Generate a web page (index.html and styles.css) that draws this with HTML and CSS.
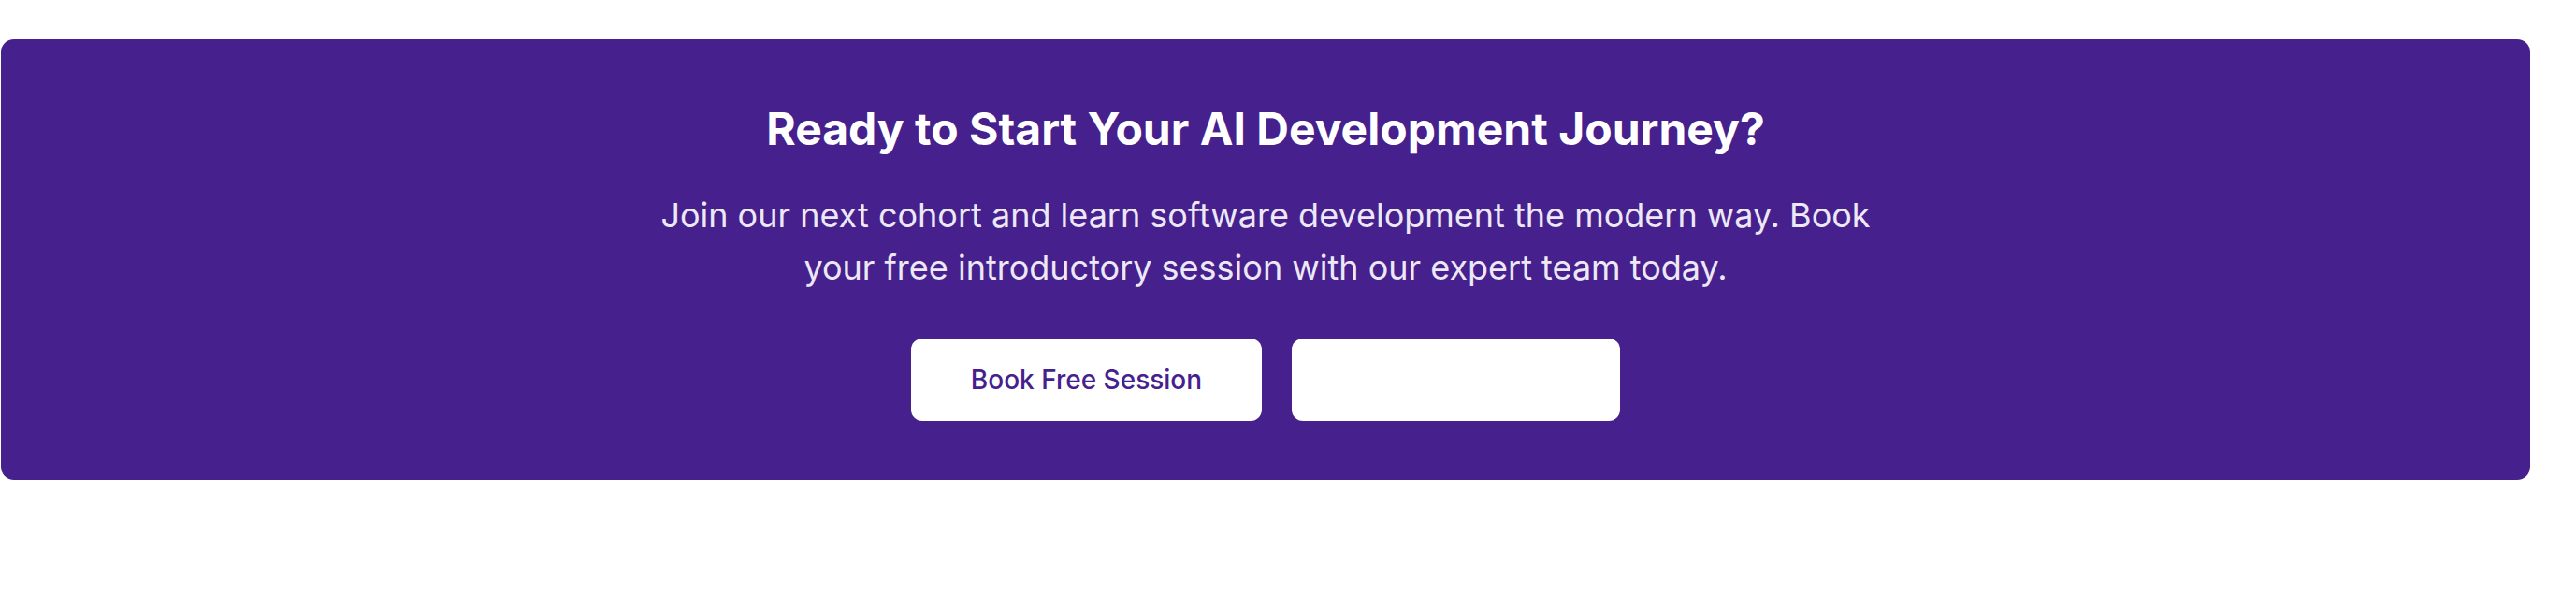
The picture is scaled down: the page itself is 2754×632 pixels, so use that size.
FILE: index.html
```html
<!DOCTYPE html>
<html lang="en">
<head>
<meta charset="utf-8">
<title>CTA</title>
<link rel="stylesheet" href="styles.css">
</head>
<body>
<main class="page">
  <section class="cta">
    <h2 class="cta-title">Ready to Start Your AI Development Journey?</h2>
    <p class="cta-text">Join our next cohort and learn software development the modern way. Book your free introductory session with our expert team today.</p>
    <div class="cta-actions">
      <a class="btn btn-primary" href="#">Book Free Session</a>
      <a class="btn btn-secondary" href="#">View Curriculum</a>
    </div>
  </section>
</main>
</body>
</html>
```
FILE: styles.css
```css
html, body {
  margin: 0;
  padding: 0;
  background: #ffffff;
}
body {
  font-family: Inter, "Noto Sans", sans-serif;
}
.page {
  padding: 42px 0 0 1px;
}
.cta {
  width: 2704px;
  box-sizing: border-box;
  background: #46208c;
  border-radius: 14px;
  padding: 64px 32px 63px;
  display: flex;
  flex-direction: column;
  align-items: center;
  text-align: center;
}
.cta-title {
  margin: 0 0 32px;
  font-size: 48px;
  line-height: 64px;
  font-weight: 700;
  color: #ffffff;
}
.cta-text {
  margin: 0 0 48px;
  max-width: 1344px;
  font-size: 36px;
  line-height: 56px;
  font-weight: 400;
  color: #ece8f6;
}
.cta-actions {
  display: flex;
  gap: 32px;
}
.btn {
  display: inline-flex;
  align-items: center;
  justify-content: center;
  height: 88px;
  box-sizing: border-box;
  border-radius: 12px;
  font-size: 28px;
  line-height: 40px;
  font-weight: 500;
  text-decoration: none;
  background: #ffffff;
}
.btn-primary {
  width: 375px;
  color: #46208c;
}
.btn-secondary {
  width: 351px;
  color: #ffffff;
}
```
